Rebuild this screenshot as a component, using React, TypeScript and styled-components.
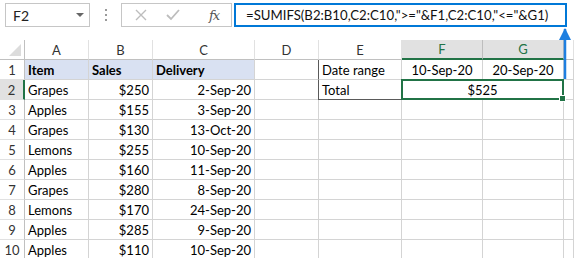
import { Fragment } from 'react'
import styled, { createGlobalStyle } from 'styled-components'

const GlobalStyle = createGlobalStyle`
    html, body {
        margin: 0;
        padding: 0;
        background: #fff;
    }
    body {
        font-family: Lato, "Liberation Sans", sans-serif;
        color: #000;
    }
`

const Page = styled.div`
    position: relative;
    width: 574px;
    height: 258px;
    overflow: hidden;
    background: #fff;
`

// Formula bar area
const Toolbar = styled.div`
    display: flex;
    align-items: stretch;
    height: 24px;
    padding: 3px 7px 0 5px;
`

const NameBox = styled.div`
    width: 85px;
    box-sizing: border-box;
    border: 1px solid #c6c6c6;
    display: flex;
    align-items: center;
    justify-content: space-between;
    padding: 0 5px 0 7px;
    font-size: 14px;
    color: #222;
`

const DropArrow = styled.span`
    width: 0;
    height: 0;
    border-left: 4px solid transparent;
    border-right: 4px solid transparent;
    border-top: 4px solid #666;
`

const Grip = styled.div`
    width: 31px;
    display: flex;
    flex-direction: column;
    align-items: center;
    justify-content: center;
    gap: 3px;

    span {
        width: 2px;
        height: 2px;
        background: #9a9a9a;
    }
`

const FuncButtons = styled.div`
    width: 111px;
    box-sizing: border-box;
    border: 1px solid #c6c6c6;
    display: flex;
    align-items: center;
    gap: 19px;
    padding: 0 0 0 13px;
`

const Fx = styled.span`
    margin-left: 10px;
    font-family: "DejaVu Serif", "Liberation Serif", serif;
    font-style: italic;
    font-size: 13px;
    color: #555;
    letter-spacing: -1px;
`

const FormulaBox = styled.div`
    flex: 1;
    margin-left: 2px;
    box-sizing: border-box;
    border: 2px solid #0078d7;
    display: flex;
    align-items: center;
    padding-left: 10px;
    font-size: 13.2px;
    color: #111;
    white-space: nowrap;
`

// Worksheet grid
const Sheet = styled.div`
    margin-top: 13px;
    display: grid;
    grid-template-columns: 25px 64px 64px 102px 64px 83px 81px 81px 10px;
    grid-auto-rows: 20px;
    font-size: 13px;
`

const Corner = styled.div`
    border-right: 1px solid #c0c0c0;
    border-bottom: 1px solid #c0c0c0;
    position: relative;

    &::after {
        content: '';
        position: absolute;
        right: 3px;
        bottom: 3px;
        width: 0;
        height: 0;
        border-left: 12px solid transparent;
        border-bottom: 12px solid #dcdcdc;
    }
`

const ColHead = styled.div<{ $sel?: boolean }>`
    display: flex;
    align-items: center;
    justify-content: center;
    box-sizing: border-box;
    border-right: 1px solid ${p => (p.$sel ? '#bdbdbd' : '#e1e1e1')};
    border-bottom: ${p => (p.$sel ? '2px solid #217346' : '1px solid #c0c0c0')};
    background: ${p => (p.$sel ? '#e1e1e1' : '#fff')};
    color: ${p => (p.$sel ? '#217346' : '#333')};
    font-size: 13px;
`

const RowHead = styled.div<{ $sel?: boolean }>`
    display: flex;
    align-items: center;
    justify-content: center;
    box-sizing: border-box;
    border-right: ${p => (p.$sel ? '2px solid #217346' : '1px solid #c0c0c0')};
    border-bottom: 1px solid #e1e1e1;
    background: ${p => (p.$sel ? '#e1e1e1' : '#fff')};
    color: #333;
    font-size: 13px;
`

const Cell = styled.div<{ $align?: string; $bold?: boolean; $fill?: boolean }>`
    display: flex;
    align-items: center;
    justify-content: ${p => p.$align || 'flex-start'};
    box-sizing: border-box;
    padding: 0 3px;
    border-right: 1px solid #d4d4d4;
    border-bottom: 1px solid #d4d4d4;
    background: ${p => (p.$fill ? '#d9e1f2' : '#fff')};
    font-weight: ${p => (p.$bold ? 700 : 400)};
    white-space: nowrap;
    overflow: hidden;
`

const BoxCell = styled(Cell)<{ $top?: boolean }>`
    border-left: 1px solid #5a5a5a;
    margin-left: -1px;
    border-bottom: 1px solid ${p => (p.$top ? '#d4d4d4' : '#5a5a5a')};
`

const EdgeCell = styled(Cell)<{ $bottom?: boolean }>`
    border-bottom: 1px solid ${p => (p.$bottom ? '#5a5a5a' : '#d4d4d4')};
`

const Selected = styled.div`
    grid-column: span 2;
    position: relative;
    display: flex;
    align-items: center;
    justify-content: center;
    box-sizing: border-box;
    margin: -1px 0 0 -1px;
    border: 2px solid #217346;
    background: #fff;

    &::after {
        content: '';
        position: absolute;
        right: -4px;
        bottom: -4px;
        width: 5px;
        height: 5px;
        background: #217346;
        border: 1px solid #fff;
    }
`

const Arrow = styled.svg`
    position: absolute;
    left: 558px;
    top: 27px;
`

const cols = ['A', 'B', 'C', 'D', 'E', 'F', 'G']

const data: [string, string, string][] = [
    ['Grapes', '$250', '2-Sep-20'],
    ['Apples', '$155', '3-Sep-20'],
    ['Grapes', '$130', '13-Oct-20'],
    ['Lemons', '$255', '10-Sep-20'],
    ['Apples', '$160', '11-Sep-20'],
    ['Grapes', '$280', '8-Sep-20'],
    ['Lemons', '$170', '24-Sep-20'],
    ['Apples', '$285', '9-Sep-20'],
    ['Apples', '$110', '10-Sep-20'],
]

const App = () => {
    return (
        <Page>
            <GlobalStyle />
            <Toolbar>
                <NameBox>
                    F2
                    <DropArrow />
                </NameBox>
                <Grip>
                    <span />
                    <span />
                    <span />
                </Grip>
                <FuncButtons>
                    <svg width="12" height="12" viewBox="0 0 12 12">
                        <path d="M1 1 L11 11 M11 1 L1 11" stroke="#bdbdbd" strokeWidth="1.4" fill="none" />
                    </svg>
                    <svg width="14" height="12" viewBox="0 0 14 12">
                        <path d="M1 6 L5 10 L13 1" stroke="#bdbdbd" strokeWidth="1.8" fill="none" />
                    </svg>
                    <Fx>fx</Fx>
                </FuncButtons>
                <FormulaBox>=SUMIFS(B2:B10,C2:C10,"&gt;="&amp;F1,C2:C10,"&lt;="&amp;G1)</FormulaBox>
            </Toolbar>

            <Sheet>
                <Corner />
                {cols.map(c => (
                    <ColHead key={c} $sel={c === 'F' || c === 'G'}>{c}</ColHead>
                ))}
                <ColHead />

                {/* row 1 */}
                <RowHead>1</RowHead>
                <Cell $bold $fill>Item</Cell>
                <Cell $bold $fill>Sales</Cell>
                <Cell $bold $fill>Delivery</Cell>
                <Cell />
                <BoxCell $top>Date range</BoxCell>
                <Cell $align="center">10-Sep-20</Cell>
                <Cell $align="center">20-Sep-20</Cell>
                <Cell />

                {/* row 2 */}
                <RowHead $sel>2</RowHead>
                <Cell>{data[0][0]}</Cell>
                <Cell $align="flex-end">{data[0][1]}</Cell>
                <Cell $align="flex-end">{data[0][2]}</Cell>
                <Cell />
                <BoxCell>Total</BoxCell>
                <Selected>$525</Selected>
                <Cell />

                {data.slice(1).map((row, i) => (
                    <Fragment key={i}>
                        <RowHead>{i + 3}</RowHead>
                        <Cell>{row[0]}</Cell>
                        <Cell $align="flex-end">{row[1]}</Cell>
                        <Cell $align="flex-end">{row[2]}</Cell>
                        <Cell />
                        <EdgeCell />
                        <Cell />
                        <Cell />
                        <Cell />
                    </Fragment>
                ))}
            </Sheet>

            <Arrow width="14" height="52" viewBox="0 0 14 52">
                <path d="M7 2 L7 52" stroke="#1e7fe0" strokeWidth="2.5" />
                <path d="M1 13 L7 1 L13 13 Z" fill="#1e7fe0" />
            </Arrow>
        </Page>
    )
}

export default App
